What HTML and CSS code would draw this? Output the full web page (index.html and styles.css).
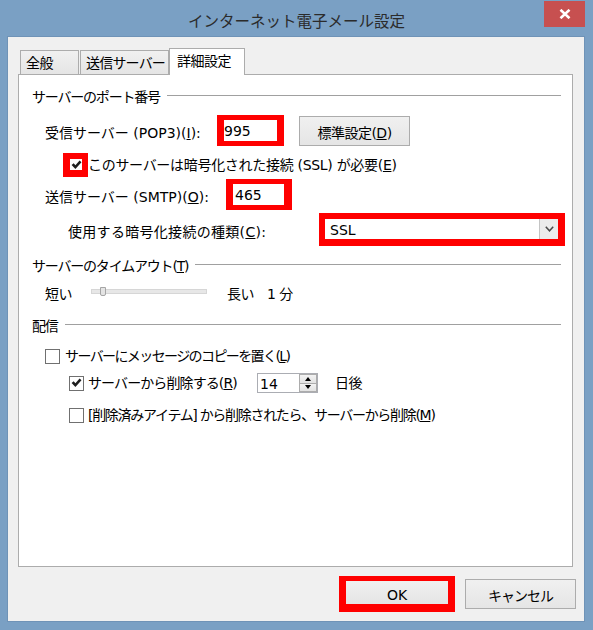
FILE: index.html
```html
<!DOCTYPE html>
<html lang="ja">
<head>
<meta charset="utf-8">
<title>インターネット電子メール設定</title>
<link rel="stylesheet" href="styles.css">
</head>
<body>
<div class="window">
  <div class="titlebar">
    <div class="title-left"></div>
    <div class="title">インターネット電子メール設定</div>
    <div class="title-right">
      <div class="close-btn">
        <svg width="12" height="10" viewBox="0 0 12 10"><path d="M1.5 0.8 L10.5 9.2 M10.5 0.8 L1.5 9.2" stroke="#fff" stroke-width="2.6" fill="none"/></svg>
      </div>
    </div>
  </div>
  <div class="client">
    <div class="tabs">
      <div class="tab tab-general">全般</div>
      <div class="tab tab-send">送信サーバー</div>
      <div class="tab tab-adv">詳細設定</div>
    </div>
    <div class="panel">
      <div class="group-head"><span class="gh-text">サーバーのポート番号</span><span class="gh-line"></span></div>
      <div class="row row-pop">
        <span class="label lbl-pop">受信サーバー (POP3)(<u>I</u>):</span>
        <div class="mark mark-pop"><span class="field-text">995</span></div>
        <button class="btn btn-default" type="button">標準設定(<u>D</u>)</button>
      </div>
      <div class="row row-ssl">
        <div class="mark mark-ssl">
          <svg width="11" height="10" viewBox="0 0 11 10"><path d="M0.6 5.1 L2.7 3.3 L4.4 5.3 L8.6 0.5 L10.5 2.2 L4.4 9.1 Z" fill="#1e1e1e"/></svg>
        </div>
        <span class="lbl-ssl">このサーバーは暗号化された接続 (SSL) が必要(<u>E</u>)</span>
      </div>
      <div class="row row-smtp">
        <span class="label lbl-smtp">送信サーバー (SMTP)(<u>O</u>):</span>
        <div class="mark mark-smtp"><span class="field-text">465</span></div>
      </div>
      <div class="row row-enc">
        <span class="label lbl-enc">使用する暗号化接続の種類(<u>C</u>):</span>
        <div class="mark mark-enc">
          <span class="enc-text">SSL</span>
          <span class="enc-arrow"><svg width="9" height="6" viewBox="0 0 9 6"><path d="M0.8 0.8 L4.5 4.8 L8.2 0.8" stroke="#4a4a4a" stroke-width="1.5" fill="none"/></svg></span>
        </div>
      </div>
      <div class="group-head gh-2"><span class="gh-text">サーバーのタイムアウト(<u>T</u>)</span><span class="gh-line"></span></div>
      <div class="row row-slider">
        <span class="lbl-short">短い</span>
        <div class="track"><span class="thumb"></span></div>
        <span class="lbl-long">長い</span>
        <span class="lbl-min">1 分</span>
      </div>
      <div class="group-head gh-3"><span class="gh-text">配信</span><span class="gh-line"></span></div>
      <div class="row row-cb1">
        <span class="cb"></span>
        <span class="cb-label">サーバーにメッセージのコピーを置く(<u>L</u>)</span>
      </div>
      <div class="row row-cb2">
        <span class="cb"><svg width="11" height="10" viewBox="0 0 11 10"><path d="M0.6 5.1 L2.7 3.3 L4.4 5.3 L8.6 0.5 L10.5 2.2 L4.4 9.1 Z" fill="#1e1e1e"/></svg></span>
        <span class="cb-label lbl-del">サーバーから削除する(<u>R</u>)</span>
        <div class="spin">
          <span class="spin-val">14</span>
          <span class="spin-btns">
            <span class="spin-up"><span class="tri-up"></span></span>
            <span class="spin-down"><span class="tri-down"></span></span>
          </span>
        </div>
        <span class="lbl-days">日後</span>
      </div>
      <div class="row row-cb3">
        <span class="cb"></span>
        <span class="cb-label">[削除済みアイテム] から削除されたら、サーバーから削除(<u>M</u>)</span>
      </div>
    </div>
    <div class="buttons">
      <div class="ok-mark"><button class="btn btn-ok" type="button">OK</button></div>
      <button class="btn btn-cancel" type="button">キャンセル</button>
    </div>
  </div>
</div>
</body>
</html>
```

FILE: styles.css
```css
* { box-sizing: border-box; }

html, body {
  margin: 0;
  padding: 0;
}

body {
  width: 593px;
  height: 630px;
  overflow: hidden;
  background: #7aa0c4;
  font-family: "DejaVu Sans", "Noto Sans CJK JP", sans-serif;
  font-size: 14px;
  letter-spacing: -0.5px;
  color: #000;
}

.window {
  width: 593px;
  height: 630px;
  display: flex;
  flex-direction: column;
}

/* title bar */
.titlebar {
  flex: none;
  height: 37px;
  display: grid;
  grid-template-columns: 1fr auto 1fr;
}

.title {
  font-family: "Noto Sans CJK JP", sans-serif;
  font-size: 15.5px;
  letter-spacing: 0;
  color: #2b2b2b;
  line-height: 20px;
  margin-top: 10px;
  white-space: nowrap;
}

.title-right {
  display: flex;
  justify-content: flex-end;
  align-items: flex-start;
}

.close-btn {
  width: 41px;
  height: 26px;
  margin-top: 1px;
  margin-right: 8px;
  background: #c75050;
  display: flex;
  align-items: center;
  justify-content: center;
}

/* client area */
.client {
  flex: none;
  width: 576px;
  height: 584px;
  margin-left: 8px;
  background: #f0f0f0;
  outline: 1px solid #6f93b7;
  padding: 11px 11px 0 10px;
  display: flex;
  flex-direction: column;
}

/* tabs */
.tabs {
  flex: none;
  display: flex;
  align-items: flex-end;
  height: 26px;
  margin-left: 2px;
}

.tab {
  flex: none;
  height: 24px;
  border: 1px solid #acacac;
  border-bottom: none;
  background: linear-gradient(#f0f0f0, #e5e5e5);
  padding: 2px 0 0 5px;
  line-height: 20px;
  white-space: nowrap;
}

.tab-general { width: 59px; }

.tab-send {
  width: 89px;
  margin-left: 1px;
  letter-spacing: -0.8px;
}

.tab-adv {
  width: 76px;
  height: 27px;
  margin-bottom: -1px;
  padding-left: 7px;
  background: #fff;
  position: relative;
  z-index: 1;
}

/* panel */
.panel {
  flex: none;
  height: 493px;
  background: #fff;
  border: 1px solid #acacac;
  padding: 12px 11px 0 13px;
}

.group-head {
  display: flex;
  align-items: center;
  height: 20px;
  line-height: 20px;
  white-space: nowrap;
  letter-spacing: -1.2px;
}

.gh-line {
  flex: 1;
  height: 1px;
  background: #a0a0a0;
  margin-left: 7px;
  margin-bottom: 4px;
}

.gh-2 { margin-top: 10px; }
.gh-3 { margin-top: 12px; }

.row {
  display: flex;
  align-items: center;
  white-space: nowrap;
  line-height: 20px;
}

.row > * { flex: none; }

.label { padding-top: 4px; }

.mark {
  border-style: solid;
  border-color: #ff0000;
  background: #fff;
  display: flex;
  align-items: center;
}

.field-text {
  letter-spacing: 0;
  padding-top: 1px;
}

/* POP3 */
.row-pop {
  height: 31px;
  margin-top: 8px;
  margin-left: 13px;
}

.lbl-pop { width: 172px; letter-spacing: 0; }

.mark-pop {
  border-width: 5px 7px 5px 7px;
  width: 67px;
  height: 31px;
}

.btn {
  font: inherit;
  letter-spacing: inherit;
  color: #000;
  border: 1px solid #acacac;
  background: linear-gradient(#f0f0f0, #e5e5e5);
  padding: 3px 0 0 0;
  margin: 0;
  display: flex;
  align-items: center;
  justify-content: center;
  line-height: 20px;
  white-space: nowrap;
}

.btn-default {
  margin-left: 15px;
  margin-top: 1px;
  width: 111px;
  height: 30px;
}

/* SSL checkbox */
.row-ssl {
  height: 24px;
  margin-top: 7px;
  margin-left: 31px;
}

.mark-ssl {
  border-width: 6px 6px 7px 7px;
  width: 25px;
  height: 24px;
  justify-content: center;
}

.lbl-ssl { letter-spacing: -0.3px; }

/* SMTP */
.row-smtp {
  height: 31px;
  margin-top: 2px;
  margin-left: 13px;
}

.lbl-smtp { width: 181px; letter-spacing: 0; }

.mark-smtp {
  border-width: 5px 8px 5px 7px;
  width: 66px;
  height: 31px;
  padding-left: 2px;
}

/* encryption */
.row-enc {
  height: 33px;
  margin-top: 3px;
  margin-left: 36px;
}

.lbl-enc { width: 251px; letter-spacing: 0.3px; }

.mark-enc {
  border-width: 6px 7px 7px 6px;
  width: 246px;
  height: 33px;
}

.enc-text {
  flex: 1;
  padding-left: 5px;
  padding-top: 1px;
  letter-spacing: 0;
}

.enc-arrow {
  width: 19px;
  height: 20px;
  border-left: 1px solid #c4c4c4;
  background: #ececec;
  display: flex;
  align-items: center;
  justify-content: center;
}

/* slider */
.row-slider {
  height: 20px;
  margin-top: 8px;
  margin-left: 13px;
}

.lbl-short { width: 46px; }

.track {
  width: 116px;
  height: 5px;
  background: #e7e7e7;
  border: 1px solid #d6d6d6;
  position: relative;
  margin-bottom: 6px;
}

.thumb {
  position: absolute;
  left: 8px;
  top: -3px;
  width: 6px;
  height: 9px;
  background: #e4e4e4;
  border: 1px solid #a6a6a6;
  border-radius: 0 0 2px 2px;
}

.lbl-long { margin-left: 20px; }
.lbl-min { margin-left: 13px; }

/* delivery checkboxes */
.cb {
  width: 15px;
  height: 15px;
  border: 1px solid #707070;
  background: #fff;
  display: flex;
  align-items: center;
  justify-content: center;
}

.row-cb1 {
  height: 20px;
  margin-top: 10px;
  margin-left: 13px;
}

.row-cb1 .cb-label {
  margin-left: 5px;
  letter-spacing: -1.6px;
}

.row-cb2 {
  height: 20px;
  margin-top: 7px;
  margin-left: 37px;
}

.row-cb3 {
  height: 20px;
  margin-top: 12px;
  margin-left: 37px;
}

.row-cb2 .cb-label { margin-left: 4px; letter-spacing: -0.9px; }
.row-cb3 .cb-label { margin-left: 4px; letter-spacing: -1.3px; }

.lbl-del { width: 169px; }

.spin {
  width: 61px;
  height: 20px;
  border: 1px solid #abadb3;
  background: #fff;
  display: flex;
}

.spin-val {
  flex: 1;
  padding-left: 2px;
  padding-top: 1px;
  line-height: 18px;
  letter-spacing: 0;
}

.spin-btns {
  width: 18px;
  display: flex;
  flex-direction: column;
}

.spin-up,
.spin-down {
  flex: 1;
  border: 1px solid #acacac;
  background: linear-gradient(#f3f3f3, #e2e2e2);
  display: flex;
  align-items: center;
  justify-content: center;
}

.spin-down { border-top: none; }

.tri-up {
  width: 0;
  height: 0;
  border-left: 3.5px solid transparent;
  border-right: 3.5px solid transparent;
  border-bottom: 4px solid #000;
}

.tri-down {
  width: 0;
  height: 0;
  border-left: 3.5px solid transparent;
  border-right: 3.5px solid transparent;
  border-top: 4px solid #000;
}

.lbl-days { margin-left: 17px; }

/* bottom buttons */
.buttons {
  flex: none;
  display: flex;
  justify-content: flex-end;
  align-items: center;
  gap: 10px;
  height: 36px;
  margin-top: 9px;
  margin-right: -3px;
}

.ok-mark {
  border: solid #ff0000;
  border-width: 5px 7px 8px 7px;
  width: 116px;
  height: 36px;
  display: flex;
}

.btn-ok {
  flex: 1;
  border: none;
  padding-top: 4px;
  letter-spacing: 0;
}

.btn-cancel {
  width: 111px;
  height: 30px;
  letter-spacing: -1px;
}
```
